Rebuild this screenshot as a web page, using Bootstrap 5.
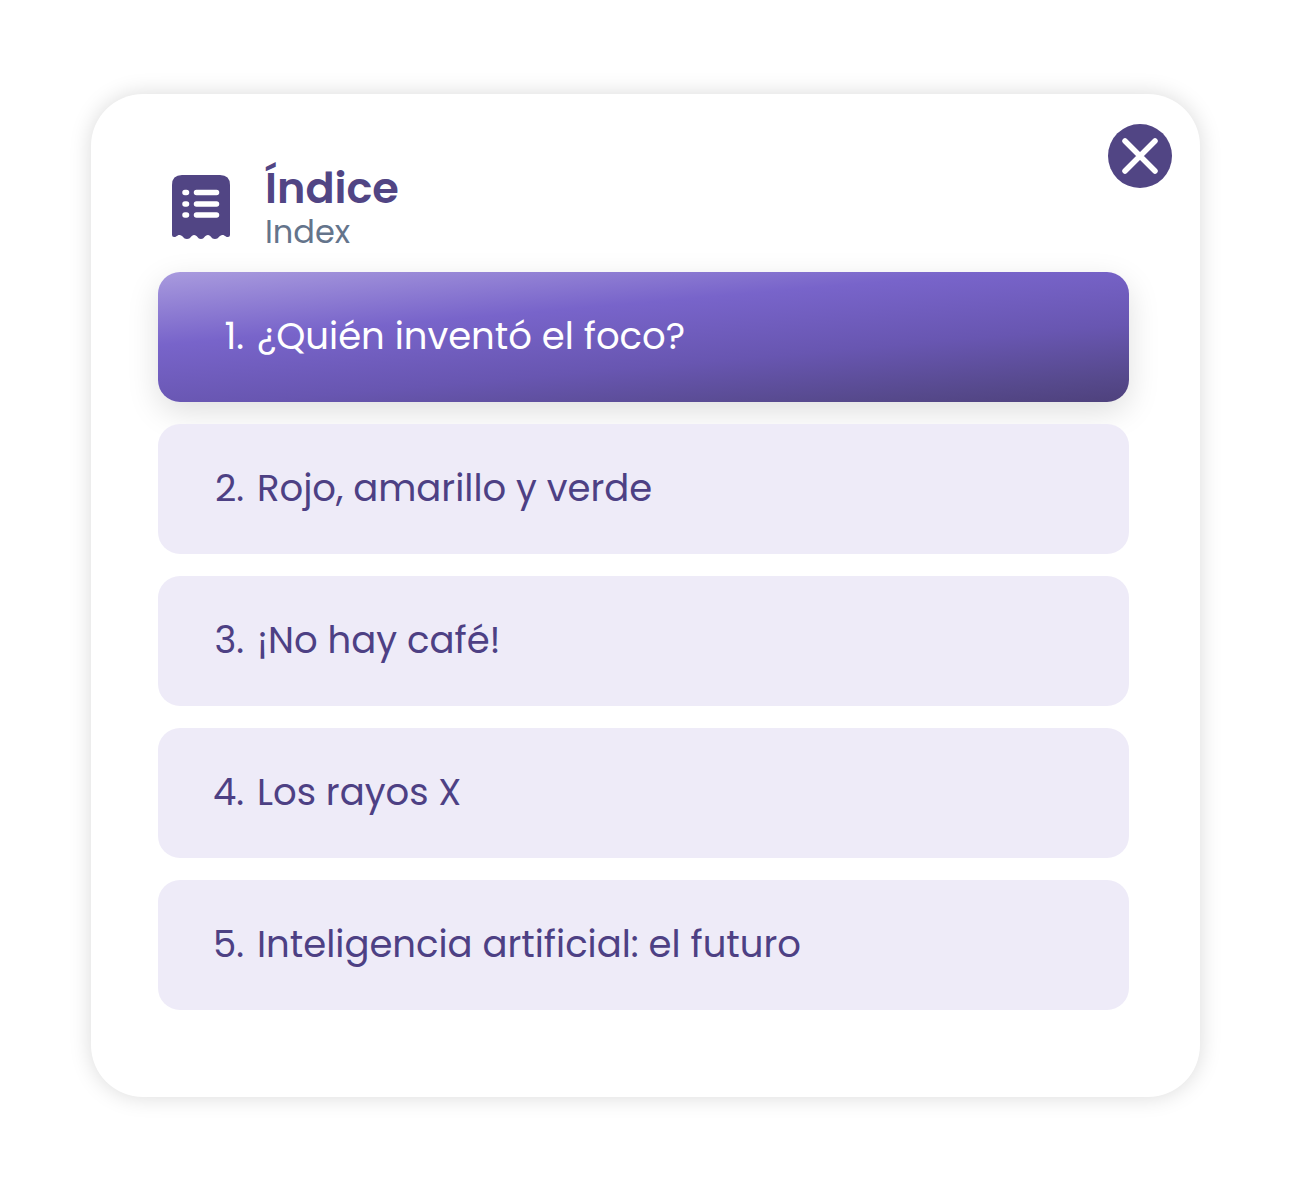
<!DOCTYPE html>
<html lang="es">
<head>
<meta charset="utf-8">
<meta name="viewport" content="width=device-width, initial-scale=1">
<title>Índice</title>
<link href="https://cdn.jsdelivr.net/npm/bootstrap@5.3.0/dist/css/bootstrap.min.css" rel="stylesheet">
<style>
  :root { --ink: #514584; --lilac: #eeebf8; --slate: #64748b; }
  body { font-family: Poppins, Inter, sans-serif; background: #fff; color: var(--ink); }
  .page-wrap { padding: 94px 90px 91px 91px; }
  .index-panel { border-radius: 52px; padding: 69px 71px 87px 67px; box-shadow: 0 0 22px rgba(0, 0, 0, .15); }
  .btn-dismiss { top: 30px; right: 28px; width: 64px; height: 64px; background: var(--ink); color: #fff; }
  .btn-dismiss:hover { background: #40366d; }
  .panel-head { gap: 35px; padding-left: 14px; margin-bottom: 21px; }
  .panel-title { font-size: 43px; line-height: 50px; font-weight: 600; }
  .panel-sub { font-size: 32px; line-height: 38px; color: var(--slate); }
  .chapters { gap: 22px; }
  .chapter { min-height: 130px; gap: 13px; padding: 12px 24px 14px; border-radius: 22px; background: var(--lilac); color: #4d4084; font-size: 37px; line-height: 46px; }
  .chapter-num { width: 62px; }
  .chapter.active { color: #fff; background: linear-gradient(175deg, #a99bde 0%, #7864ca 34%, #6856b1 64%, #56498c 88%, #4e417c 100%); box-shadow: 0 10px 32px rgba(0, 0, 0, .13); }
  .chapters li:not(:first-child) { z-index: 1; }
</style>
</head>
<body>
<main class="page-wrap">
  <section class="index-panel position-relative bg-white" aria-labelledby="index-title">
    <button type="button" class="btn-dismiss position-absolute border-0 rounded-circle p-0 d-flex" aria-label="Cerrar">
      <svg width="64" height="64" viewBox="0 0 64 64" fill="none" stroke="currentColor" stroke-width="5.500" stroke-linecap="round" aria-hidden="true"><path d="M17 17 47 47M47 17 17 47"/></svg>
    </button>
    <header class="panel-head d-flex align-items-center">
      <svg class="flex-shrink-0" width="58" height="64" viewBox="0 0 58 64" aria-hidden="true">
        <path fill="#514584" d="M10 0H48Q58 0 58 10V60Q58 62 56 62C53 62 53 60 50.500 60C47 60 47 64 43 64C39 64 39 60 36 60C32.500 60 32.500 64 29 64C25.500 64 25.500 60 22 60C19 60 19 64 15 64C11 64 11 60 7.500 60C5 60 5 62 2 62Q0 62 0 60V10Q0 0 10 0Z"/>
        <path stroke="#fff" stroke-width="5.500" stroke-linecap="round" d="M24.500 17.500H44.500M24.500 29H44.500M24.500 40H44.500M13 17.500H14.500M13 29H14.500M13 40H14.500"/>
      </svg>
      <div>
        <h1 class="panel-title m-0" id="index-title">Índice</h1>
        <p class="panel-sub m-0" lang="en">Index</p>
      </div>
    </header>
    <ol class="chapters list-unstyled d-flex flex-column m-0">
      <li><a href="#foco" class="chapter active d-flex align-items-center text-decoration-none" aria-current="true"><span class="chapter-num flex-shrink-0 text-end">1.</span><span>¿Quién inventó el foco?</span></a></li>
      <li><a href="#semaforo" class="chapter d-flex align-items-center text-decoration-none"><span class="chapter-num flex-shrink-0 text-end">2.</span><span>Rojo, amarillo y verde</span></a></li>
      <li><a href="#cafe" class="chapter d-flex align-items-center text-decoration-none"><span class="chapter-num flex-shrink-0 text-end">3.</span><span>¡No hay café!</span></a></li>
      <li><a href="#rayos-x" class="chapter d-flex align-items-center text-decoration-none"><span class="chapter-num flex-shrink-0 text-end">4.</span><span>Los rayos X</span></a></li>
      <li><a href="#ia" class="chapter d-flex align-items-center text-decoration-none"><span class="chapter-num flex-shrink-0 text-end">5.</span><span>Inteligencia artificial: el futuro</span></a></li>
    </ol>
  </section>
</main>
<script src="https://cdn.jsdelivr.net/npm/bootstrap@5.3.0/dist/js/bootstrap.bundle.min.js"></script>
</body>
</html>
